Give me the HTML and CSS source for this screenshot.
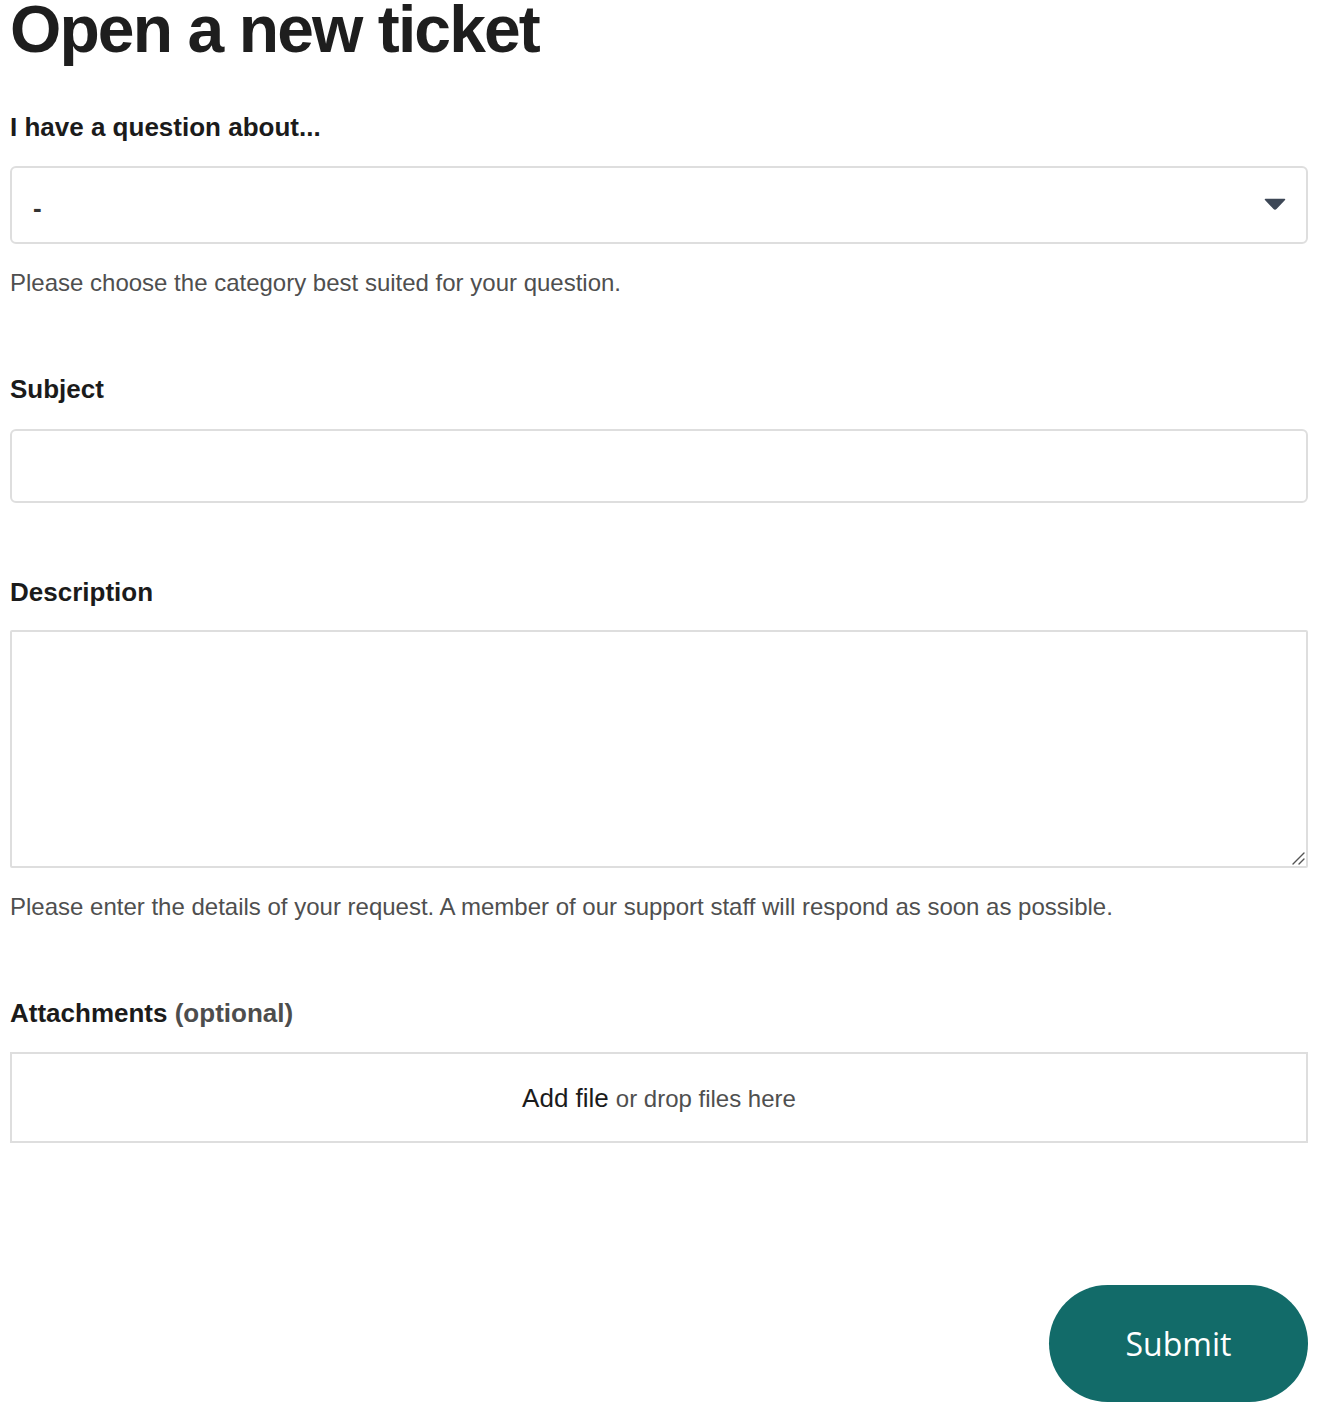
FILE: index.html
```html
<!DOCTYPE html>
<html lang="en">
<head>
<meta charset="utf-8">
<title>Open a new ticket</title>
<link rel="stylesheet" href="styles.css">
</head>
<body>
<main class="page">
  <h1 class="title">Open a new ticket</h1>
  <form class="form">
    <div class="field field-category">
      <label class="label">I have a question about...</label>
      <div class="select">
        <span class="select-value">-</span>
        <svg class="select-arrow" width="22" height="12" viewBox="0 0 22 12"><path d="M1.5 1.5 H20.5 L12.2 10.3 Q11 11.5 9.8 10.3 Z" fill="#3d4756" stroke="#3d4756" stroke-width="1.5" stroke-linejoin="round"/></svg>
      </div>
      <p class="hint hint-category">Please choose the category best suited for your question.</p>
    </div>
    <div class="field field-subject">
      <label class="label">Subject</label>
      <div class="input"></div>
    </div>
    <div class="field field-description">
      <label class="label">Description</label>
      <div class="textarea">
        <svg class="grip" width="14" height="14" viewBox="0 0 14 14"><path d="M2 13 L13 2 M8 13 L13 8" stroke="#555" stroke-width="1.4" stroke-linecap="round"/></svg>
      </div>
      <p class="hint hint-description">Please enter the details of your request. A member of our support staff will respond as soon as possible.</p>
    </div>
    <div class="field field-attach">
      <label class="label">Attachments <span class="optional">(optional)</span></label>
      <div class="dropzone"><span class="add">Add file</span> <span class="drop">or drop files here</span></div>
    </div>
    <div class="actions">
      <button type="button" class="submit">Submit</button>
    </div>
  </form>
</main>
</body>
</html>
```
FILE: styles.css
```css
* { box-sizing: border-box; }
html, body { margin: 0; padding: 0; background: #fff; }
body { font-family: "Liberation Sans", Arial, sans-serif; color: #1b1b1b; }
.page { margin-left: 10px; width: 1298px; padding-bottom: 20px; }
.title {
  margin: 0;
  font-size: 66px;
  line-height: 58px;
  font-weight: 700;
  letter-spacing: -1.9px;
  color: #1e1e1e;
}
.form { display: flex; flex-direction: column; }
.label {
  display: block;
  font-size: 26px;
  line-height: 32px;
  font-weight: 700;
  color: #1b1b1b;
}
.optional { color: #4d4d4d; }
.field-category { margin-top: 53px; }
.field-category .label { margin-bottom: 23px; }
.select {
  height: 78px;
  border: 2px solid #dedede;
  border-radius: 6px;
  display: flex;
  align-items: center;
  justify-content: space-between;
  padding: 0 20px 0 21px;
}
.select-value { font-size: 26px; font-weight: 700; color: #333; margin-top: 6px; }
.select-arrow { margin-top: -2px; }
.hint {
  margin: 0;
  font-size: 24px;
  line-height: 32px;
  color: #4f4f4f;
}
.hint-category { margin-top: 23px; }
.field-subject { margin-top: 74px; }
.field-subject .label { margin-bottom: 24px; }
.input {
  height: 74px;
  border: 2px solid #dedede;
  border-radius: 6px;
}
.field-description { margin-top: 73px; }
.field-description .label { margin-bottom: 22px; }
.textarea {
  height: 238px;
  border: 2px solid #dedede;
  border-radius: 2px;
  display: flex;
  align-items: flex-end;
  justify-content: flex-end;
  padding: 0 1px 1px 0;
}
.hint-description { margin-top: 23px; }
.field-attach { margin-top: 74px; }
.field-attach .label { margin-bottom: 23px; }
.dropzone {
  height: 91px;
  border: 2px solid #dedede;
  display: flex;
  align-items: center;
  justify-content: center;
  gap: 7px;
  padding-top: 2px;
}
.add { font-size: 26px; color: #1b1b1b; }
.drop { font-size: 24px; color: #4f4f4f; }
.actions { display: flex; justify-content: flex-end; margin-top: 142px; }
.submit {
  width: 259px;
  height: 117px;
  border: none;
  border-radius: 59px;
  background: #126b69;
  color: #fff;
  font-family: "Open Sans", sans-serif;
  font-size: 32px;
  padding: 0;
  cursor: pointer;
}
```
